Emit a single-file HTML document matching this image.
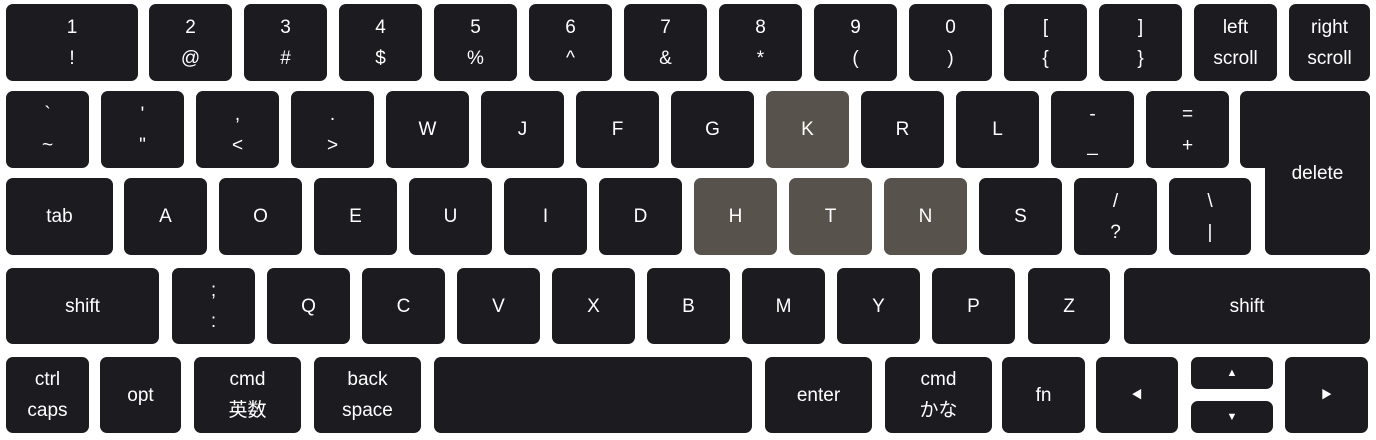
<!DOCTYPE html>
<html><head><meta charset="utf-8"><style>
body{margin:0;width:1376px;height:440px;background:#fff;overflow:hidden;position:relative}
.k{position:absolute;background:#1c1b1f;border-radius:7px;color:#fff;display:flex;flex-direction:column;align-items:center;justify-content:center;font:19px "Liberation Sans","Noto Sans CJK JP",sans-serif;line-height:31px;text-align:center}
.h{background:#57524b}
.r1{top:4px;height:77px}.r2{top:91px;height:77px}.r3{top:178px;height:77px}.r4{top:268px;height:76px}.r5{top:357px;height:76px}
.w{width:83px}
</style></head><body>
<div class="k r1" style="left:6px;width:132px">1<br>!</div>
<div class="k r1 w" style="left:149px">2<br>@</div>
<div class="k r1 w" style="left:244px">3<br>#</div>
<div class="k r1 w" style="left:339px">4<br>$</div>
<div class="k r1 w" style="left:434px">5<br>%</div>
<div class="k r1 w" style="left:529px">6<br>^</div>
<div class="k r1 w" style="left:624px">7<br>&amp;</div>
<div class="k r1 w" style="left:719px">8<br>*</div>
<div class="k r1 w" style="left:814px">9<br>(</div>
<div class="k r1 w" style="left:909px">0<br>)</div>
<div class="k r1 w" style="left:1004px">[<br>{</div>
<div class="k r1 w" style="left:1099px">]<br>}</div>
<div class="k r1 w" style="left:1194px">left<br>scroll</div>
<div class="k r1" style="left:1289px;width:81px">right<br>scroll</div>

<div class="k r2 w" style="left:6px">`<br>~</div>
<div class="k r2 w" style="left:101px">'<br>"</div>
<div class="k r2 w" style="left:196px">,<br>&lt;</div>
<div class="k r2 w" style="left:291px">.<br>&gt;</div>
<div class="k r2 w" style="left:386px">W</div>
<div class="k r2 w" style="left:481px">J</div>
<div class="k r2 w" style="left:576px">F</div>
<div class="k r2 w" style="left:671px">G</div>
<div class="k r2 w h" style="left:766px">K</div>
<div class="k r2 w" style="left:861px">R</div>
<div class="k r2 w" style="left:956px">L</div>
<div class="k r2 w" style="left:1051px">-<br>_</div>
<div class="k r2 w" style="left:1146px">=<br>+</div>
<div class="k" style="left:1240px;top:91px;width:130px;height:77px"></div>
<div class="k" style="left:1265px;top:91px;width:105px;height:164px;padding-top:0;justify-content:flex-start"><span style="position:absolute;top:67px;left:0;right:0">delete</span></div>

<div class="k r3" style="left:6px;width:107px">tab</div>
<div class="k r3 w" style="left:124px">A</div>
<div class="k r3 w" style="left:219px">O</div>
<div class="k r3 w" style="left:314px">E</div>
<div class="k r3 w" style="left:409px">U</div>
<div class="k r3 w" style="left:504px">I</div>
<div class="k r3 w" style="left:599px">D</div>
<div class="k r3 w h" style="left:694px">H</div>
<div class="k r3 w h" style="left:789px">T</div>
<div class="k r3 w h" style="left:884px">N</div>
<div class="k r3 w" style="left:979px">S</div>
<div class="k r3 w" style="left:1074px">/<br>?</div>
<div class="k r3" style="left:1169px;width:82px">\<br>|</div>

<div class="k r4" style="left:6px;width:153px">shift</div>
<div class="k r4" style="left:172px;width:83px">;<br>:</div>
<div class="k r4 w" style="left:267px">Q</div>
<div class="k r4 w" style="left:362px">C</div>
<div class="k r4 w" style="left:457px">V</div>
<div class="k r4 w" style="left:552px">X</div>
<div class="k r4 w" style="left:647px">B</div>
<div class="k r4 w" style="left:742px">M</div>
<div class="k r4 w" style="left:837px">Y</div>
<div class="k r4 w" style="left:932px">P</div>
<div class="k r4" style="left:1028px;width:82px">Z</div>
<div class="k r4" style="left:1124px;width:246px">shift</div>

<div class="k r5" style="left:6px;width:83px">ctrl<br>caps</div>
<div class="k r5" style="left:100px;width:81px">opt</div>
<div class="k r5" style="left:194px;width:107px">cmd<br>英数</div>
<div class="k r5" style="left:314px;width:107px">back<br>space</div>
<div class="k r5" style="left:434px;width:318px"></div>
<div class="k r5" style="left:765px;width:107px">enter</div>
<div class="k r5" style="left:885px;width:107px">cmd<br>かな</div>
<div class="k r5" style="left:1002px;width:83px">fn</div>
<div class="k r5" style="left:1096px;width:82px;font-size:11px">◀</div>
<div class="k" style="left:1191px;top:357px;width:82px;height:32px;font-size:11px">▲</div>
<div class="k" style="left:1191px;top:401px;width:82px;height:32px;font-size:11px">▼</div>
<div class="k r5" style="left:1285px;width:83px;font-size:11px">▶</div>
</body></html>
